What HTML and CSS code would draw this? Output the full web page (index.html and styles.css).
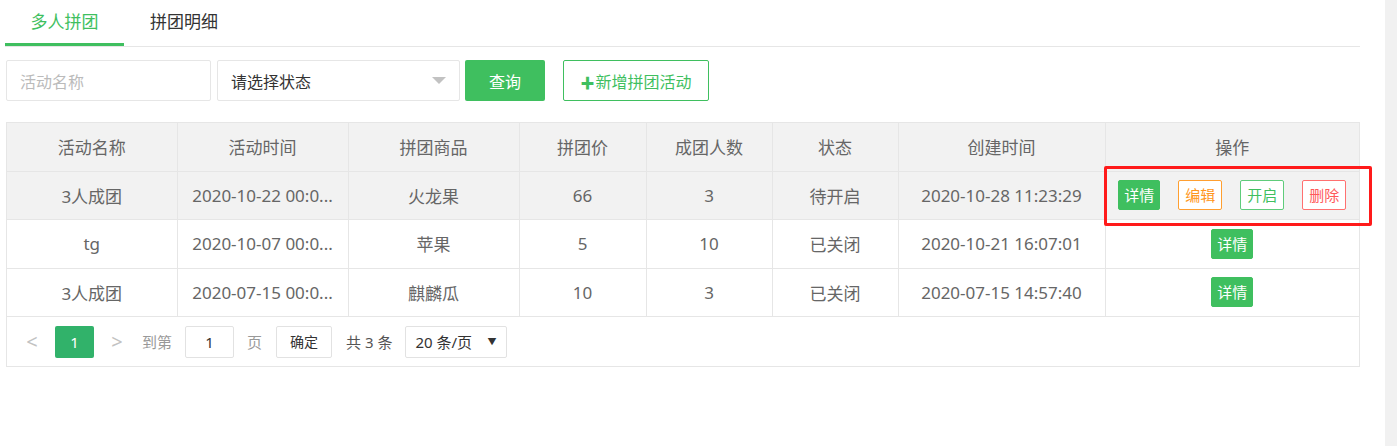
FILE: index.html
```html
<!DOCTYPE html>
<html lang="zh">
<head>
<meta charset="utf-8">
<title>多人拼团</title>
<link rel="stylesheet" href="styles.css">
</head>
<body>
<div class="app">
  <main class="main">
    <div class="tabs">
      <div class="tab active">多人拼团</div>
      <div class="tab">拼团明细</div>
    </div>
    <div class="toolbar">
      <div class="input name-input">活动名称</div>
      <div class="input select-input">
        <span>请选择状态</span>
        <span class="caret"></span>
      </div>
      <button class="btn btn-primary">查询</button>
      <button class="btn btn-outline"><span class="plus">✚</span>新增拼团活动</button>
    </div>
    <div class="table-wrap">
      <table class="table">
        <colgroup>
          <col class="c1"><col class="c2"><col class="c3"><col class="c4"><col class="c5"><col class="c6"><col class="c7"><col>
        </colgroup>
        <thead>
          <tr><th>活动名称</th><th>活动时间</th><th>拼团商品</th><th>拼团价</th><th>成团人数</th><th>状态</th><th>创建时间</th><th>操作</th></tr>
        </thead>
        <tbody>
          <tr class="hover">
            <td>3人成团</td><td>2020-10-22 00:0...</td><td>火龙果</td><td>66</td><td>3</td><td>待开启</td><td>2020-10-28 11:23:29</td>
            <td class="ops-cell">
              <div class="ops">
                <span class="mini mini-green">详情</span>
                <span class="mini mini-orange">编辑</span>
                <span class="mini mini-line-green">开启</span>
                <span class="mini mini-red">删除</span>
              </div>
              <div class="mark"></div>
            </td>
          </tr>
          <tr>
            <td>tg</td><td>2020-10-07 00:0...</td><td>苹果</td><td>5</td><td>10</td><td>已关闭</td><td>2020-10-21 16:07:01</td>
            <td><div class="ops"><span class="mini mini-green">详情</span></div></td>
          </tr>
          <tr>
            <td>3人成团</td><td>2020-07-15 00:0...</td><td>麒麟瓜</td><td>10</td><td>3</td><td>已关闭</td><td>2020-07-15 14:57:40</td>
            <td><div class="ops"><span class="mini mini-green">详情</span></div></td>
          </tr>
        </tbody>
      </table>
      <div class="pager">
        <span class="arrow">&lt;</span>
        <span class="page-cur">1</span>
        <span class="arrow">&gt;</span>
        <span class="pager-text goto">到第</span>
        <span class="pager-input">1</span>
        <span class="pager-text">页</span>
        <span class="pager-btn">确定</span>
        <span class="pager-count">共 3 条</span>
        <span class="pager-select">20 条/页<span class="tri">▼</span></span>
      </div>
    </div>
  </main>
  <div class="scrollbar"></div>
</div>
</body>
</html>
```

FILE: styles.css
```css
* { box-sizing: border-box; }
html, body { margin: 0; padding: 0; background: #fff; }
body {
  font-family: "Noto Sans", "Noto Sans CJK SC", sans-serif;
  color: #666;
  height: 446px;
  overflow: hidden;
}
.app { display: flex; height: 446px; }
.main { flex: 1; padding-left: 5px; padding-right: 25px; }
.scrollbar { width: 12px; background: #f1f1f1; }

.tabs {
  display: flex;
  height: 47px;
  border-bottom: 1px solid #e6e6e6;
}
.tab {
  width: 120px;
  text-align: center;
  font-size: 17px;
  line-height: 44px;
  color: #333;
  height: 46px;
}
.tab.active {
  color: #3fbf5f;
  border-bottom: 3px solid #3fbf5f;
  width: 119px;
}

.toolbar {
  display: flex;
  align-items: center;
  margin-top: 13px;
  padding-left: 1px;
  height: 41px;
}
.input {
  height: 41px;
  border: 1px solid #e6e6e6;
  border-radius: 2px;
  font-size: 16px;
  display: flex;
  align-items: center;
  padding-left: 13px;
}
.name-input { width: 205px; color: #bbb; }
.select-input {
  width: 243px;
  margin-left: 6px;
  color: #333;
  justify-content: space-between;
  padding-right: 13px;
}
.caret {
  width: 0; height: 0;
  border-left: 7px solid transparent;
  border-right: 7px solid transparent;
  border-top: 7px solid #c2c2c2;
}
.btn {
  font-family: inherit;
  height: 41px;
  border-radius: 2px;
  font-size: 16px;
  padding: 0;
  cursor: pointer;
}
.btn-primary {
  width: 80px;
  margin-left: 5px;
  background: #3fbf5f;
  border: none;
  color: #fff;
}
.btn-outline {
  width: 146px;
  height: 41px;
  margin-left: 18px;
  background: #fff;
  border: 1px solid #3fbf5f;
  color: #3fbf5f;
}
.plus { font-size: 14px; margin-right: 1px; }

.table-wrap {
  margin-top: 21px;
  margin-left: 1px;
  border: 1px solid #e6e6e6;
}
.table {
  width: 100%;
  border-collapse: collapse;
  table-layout: fixed;
  font-size: 17px;
}
.c1 { width: 170px; }
.c2, .c3 { width: 171px; }
.c4 { width: 127px; }
.c5, .c6 { width: 126px; }
.c7 { width: 207px; }
.table th, .table td {
  border-right: 1px solid #e6e6e6;
  border-bottom: 1px solid #e6e6e6;
  text-align: center;
  font-weight: normal;
  color: #666;
  white-space: nowrap;
  padding: 0;
}
.table th:last-child, .table td:last-child { border-right: none; }
.table thead tr { height: 48px; background: #f2f2f2; }
.table tbody tr { height: 48.5px; }
.table tbody tr.hover { background: #f2f2f2; }
.ops-cell { position: relative; }
.ops { display: flex; justify-content: center; gap: 18px; }
.mini {
  display: inline-block;
  width: 44px;
  height: 30px;
  line-height: 28px;
  font-size: 15px;
  border-radius: 2px;
  border: 1px solid transparent;
  text-align: center;
}
.mini-green { background: #3fbf5f; border-color: #3fbf5f; color: #fff; width: 42px; }
.mini-orange { background: #fff; border-color: #ff9f30; color: #ff9620; }
.mini-line-green { background: #fff; border-color: #5fcc7b; color: #3fbf5f; }
.mini-red { background: #fff; border-color: #ff7070; color: #ff5a5a; }
.mark {
  position: absolute;
  left: -2px; top: -6px;
  width: 268px; height: 60px;
  border: 3px solid #ff1a1a;
  border-radius: 2px;
  pointer-events: none;
}

.pager {
  height: 49px;
  display: flex;
  align-items: center;
  padding-left: 19px;
  font-size: 15px;
}
.arrow { color: #c2c2c2; font-size: 20px; width: 12px; text-align: center; }
.page-cur {
  margin-left: 17px;
  margin-right: 17px;
  width: 39px;
  height: 32px;
  line-height: 32px;
  text-align: center;
  background: #31b26a;
  color: #fff;
  border-radius: 2px;
}
.pager-text { color: #999; }
.goto { margin-left: 19px; }
.pager-input {
  margin: 0 13px;
  width: 49px;
  height: 32px;
  line-height: 30px;
  border: 1px solid #e2e2e2;
  border-radius: 2px;
  text-align: center;
  color: #333;
}
.pager-btn {
  margin-left: 14px;
  width: 56px;
  height: 32px;
  line-height: 30px;
  border: 1px solid #e2e2e2;
  border-radius: 2px;
  text-align: center;
  color: #333;
  font-size: 14px;
}
.pager-count { margin-left: 14px; color: #555; }
.pager-select {
  margin-left: 13px;
  width: 102px;
  height: 32px;
  border: 1px solid #e2e2e2;
  border-radius: 2px;
  display: flex;
  align-items: center;
  justify-content: space-between;
  padding: 0 10px 0 9px;
  color: #333;
}
.tri { font-size: 9px; color: #333; }
```
